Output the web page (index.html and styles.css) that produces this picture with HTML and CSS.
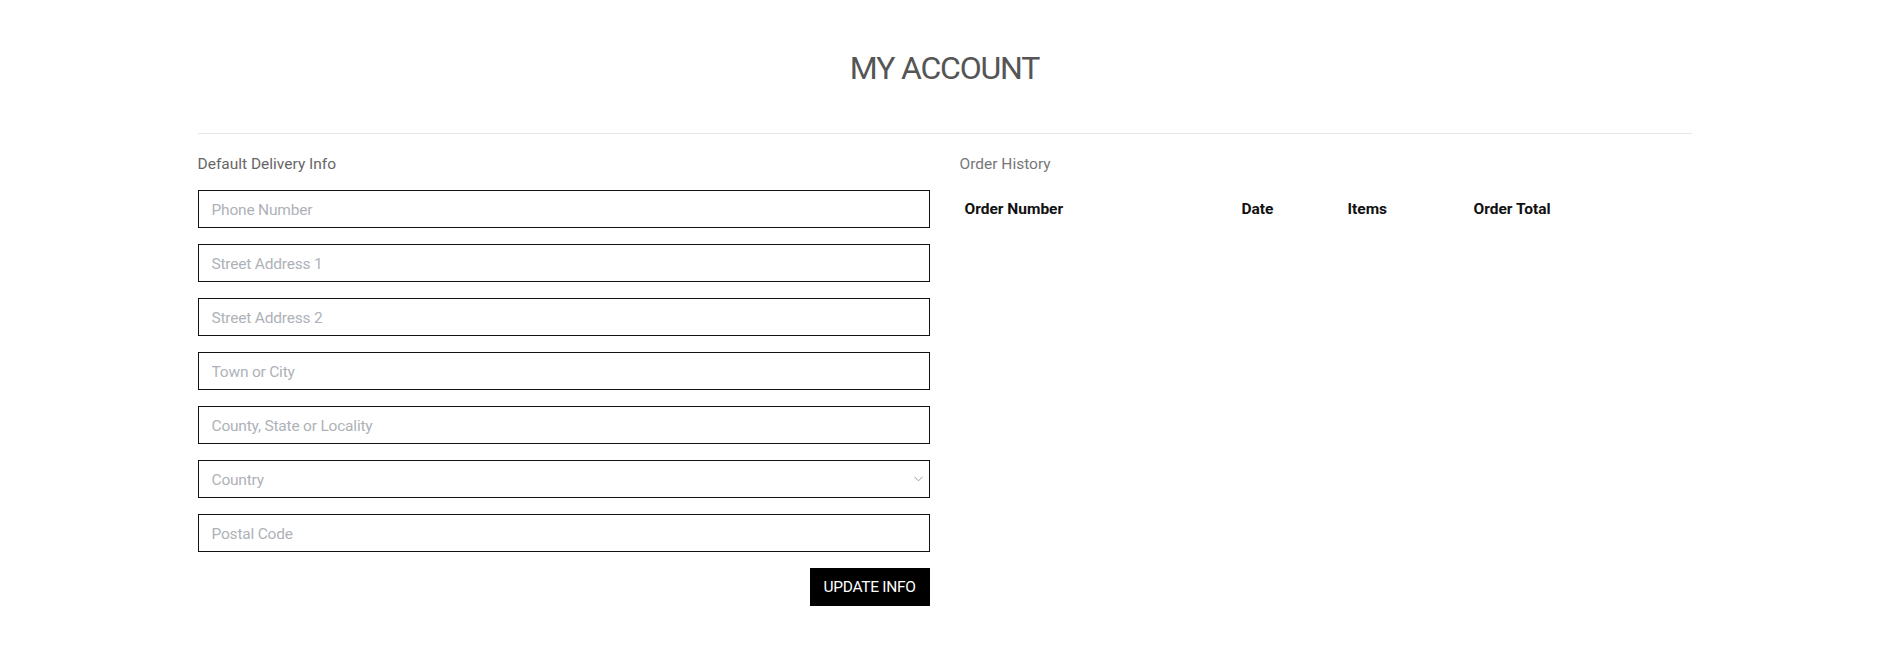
FILE: index.html
```html
<!DOCTYPE html>
<html lang="en">
<head>
<meta charset="utf-8">
<title>My Account</title>
<link rel="stylesheet" href="styles.css">
</head>
<body>
<main class="page">
  <h1 class="title">MY ACCOUNT</h1>
  <hr class="divider">
  <div class="columns">
    <section class="col">
      <p class="section-label">Default Delivery Info</p>
      <form class="form">
        <input class="field" type="text" placeholder="Phone Number">
        <input class="field" type="text" placeholder="Street Address 1">
        <input class="field" type="text" placeholder="Street Address 2">
        <input class="field" type="text" placeholder="Town or City">
        <input class="field" type="text" placeholder="County, State or Locality">
        <div class="select-wrap">
          <select class="field select">
            <option>Country</option>
          </select>
          <svg class="chevron" width="9" height="6" viewBox="0 0 9 6"><path d="M0.5 0.8 L4.5 4.8 L8.5 0.8" fill="none" stroke="#9a9a9a" stroke-width="1"/></svg>
        </div>
        <input class="field" type="text" placeholder="Postal Code">
        <div class="actions">
          <button class="btn" type="button">UPDATE INFO</button>
        </div>
      </form>
    </section>
    <section class="col">
      <p class="section-label light">Order History</p>
      <table class="orders">
        <thead>
          <tr>
            <th class="c-num">Order Number</th>
            <th class="c-date">Date</th>
            <th class="c-items">Items</th>
            <th class="c-total">Order Total</th>
          </tr>
        </thead>
        <tbody></tbody>
      </table>
    </section>
  </div>
</main>
</body>
</html>
```

FILE: styles.css
```css
* { box-sizing: border-box; }
html, body { margin: 0; padding: 0; background: #fff; }
body {
  font-family: Roboto, "Liberation Sans", sans-serif;
  color: #222;
}
.page {
  width: 1494px;
  margin: 0 auto;
}
.title {
  margin: 49px 0 0;
  font-size: 32px;
  line-height: 38px;
  font-weight: 400;
  color: #555;
  text-align: center;
  letter-spacing: -1.2px;
}
.divider {
  margin: 46px 0 0;
  border: 0;
  border-top: 1px solid #e6e6e6;
  height: 0;
}
.columns {
  display: grid;
  grid-template-columns: 732px 732px;
  column-gap: 30px;
}
.section-label {
  margin: 18px 0 0;
  font-size: 15.5px;
  line-height: 24px;
  color: #666;
  letter-spacing: 0;
}
.section-label.light { color: #777; }
.form {
  display: flex;
  flex-direction: column;
  gap: 16px;
  margin-top: 14px;
}
.field {
  display: block;
  width: 100%;
  height: 38px;
  border: 1px solid #111;
  border-radius: 0;
  padding: 2px 13px 0;
  font-family: Roboto, "Liberation Sans", sans-serif;
  font-size: 15.5px;
  letter-spacing: -0.2px;
  color: #333;
  background: #fff;
  outline: none;
}
.field::placeholder { color: #aeb2b8; }
.select-wrap { position: relative; }
.select {
  appearance: none;
  -webkit-appearance: none;
  color: #aeb2b8;
}
.chevron {
  position: absolute;
  right: 7px;
  top: 16px;
}
.actions {
  display: flex;
  justify-content: flex-end;
}
.btn {
  height: 38px;
  width: 120px;
  padding: 0;
  border: 0;
  border-radius: 0;
  background: #000;
  color: #fff;
  font-family: Roboto, "Liberation Sans", sans-serif;
  font-size: 15.5px;
  letter-spacing: -0.3px;
  cursor: pointer;
}
.orders {
  margin-top: 13px;
  width: 100%;
  border-collapse: collapse;
  table-layout: fixed;
}
.orders th {
  text-align: left;
  padding: 8px 5px;
  font-size: 15.5px;
  line-height: 24px;
  font-weight: 700;
  color: #111;
  letter-spacing: 0;
}
.c-num { width: 277px; }
.c-date { width: 106px; }
.c-items { width: 126px; }
```
